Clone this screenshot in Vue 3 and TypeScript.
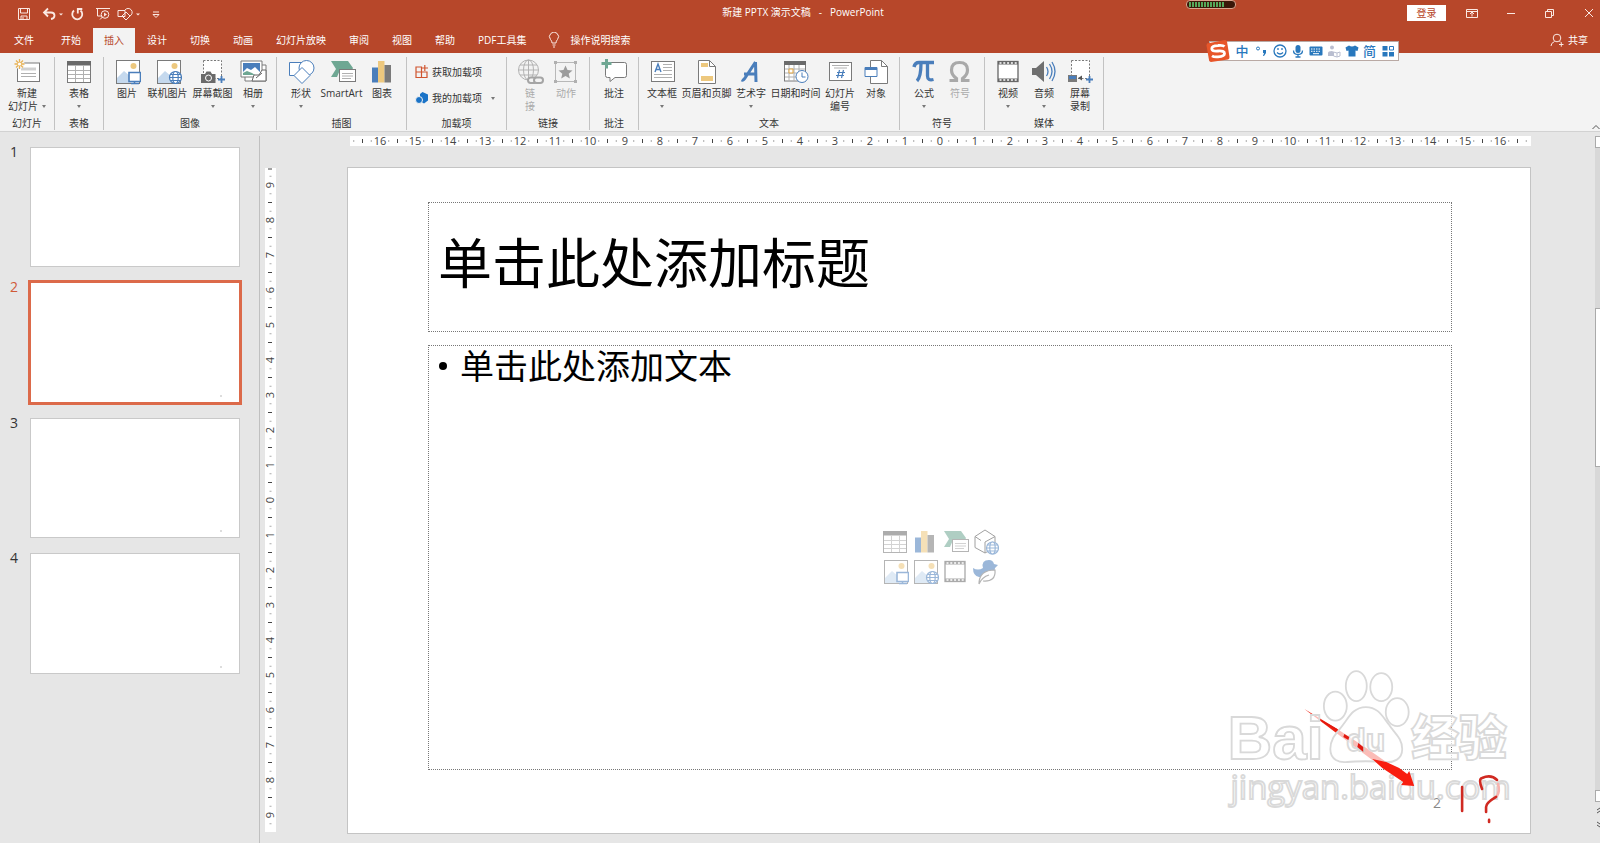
<script setup lang="ts">
import { ref } from 'vue'

interface Item { label: string[]; icon: string; wide?: string; caret?: 'below' | 'inline'; off?: boolean }
interface Group { name: string; items: Item[]; size?: string }

const B = '#4a7ebb', G = '#7a7a7a', L = '#b0b0b0', Y = '#edc87e', S = '#c5d9ee', T = '#6fa793'

const globe = (x: number, y: number, r: number, c: string) =>
  `<g fill="#fff" fill-opacity=".85" stroke="${c}" stroke-width="1.2"><circle cx="${x}" cy="${y}" r="${r}"/><ellipse cx="${x}" cy="${y}" rx="${r * 0.45}" ry="${r}"/><path d="M${x - r} ${y}h${2 * r}M${x - r * 0.85} ${y - r / 2}h${r * 1.7}M${x - r * 0.85} ${y + r / 2}h${r * 1.7}"/></g>`
const photo = `<rect x="3.5" y="1.5" width="23" height="23" fill="#fff" stroke="${G}"/><circle cx="20.500" cy="7" r="3" fill="${Y}"/><path d="M4 24v-5l7-7 7 6v6z" fill="${S}"/>`
const film = `<rect x="4" y="2.500" width="20" height="20" fill="#fff" stroke="#666" stroke-width="1.300"/><path d="M4 4h20M4 21h20" stroke="#666" stroke-width="3"/><path d="M5.500 4h18M5.500 21h18" stroke="#fff" stroke-width="1.600" stroke-dasharray="2 1.800"/>`
const table = `<rect x="2.500" y="2.500" width="23" height="21" fill="#fff" stroke="${G}"/><rect x="2" y="2" width="24" height="4.500" fill="#6a6a6a"/><path d="M3 11.500h22M3 15.500h22M3 19.500h22M10.500 6v17M18.500 6v17" stroke="${L}"/>`
const chart = `<path d="M4 8.500h6v15H4z" fill="${B}"/><path d="M10 2h6.500v21.500H10z" fill="${Y}"/><path d="M16.500 6H23v17.500h-6.500z" fill="${G}"/>`
const smart = `<path d="M3 2h17l5 7-1 2H12l-3 7H3l5-8z" fill="${T}"/><rect x="11.500" y="10.500" width="16" height="12" fill="#fff" stroke="${G}"/><path d="M14 14.500h11M14 17h11M14 19.500h9" stroke="${L}"/>`

const icons: Record<string, string> = {
  slide: `<rect x="4.500" y="4" width="22" height="18.500" fill="#fff" stroke="${G}"/><path d="M8 8.500h15v3H8z" fill="#d0d0d0"/><path d="M8 14.500h15M8 17.500h15" stroke="${L}"/><circle cx="6.500" cy="5" r="5" fill="#f3f3f3"/><path d="M6.500 0v10M1.500 5h10M3 1.500l7 7M10 1.500l-7 7" stroke="#e9b254" stroke-width="1.300"/><circle cx="6.500" cy="5" r="1.600" fill="#fff"/>`,
  table, chart, smart, film,
  photo: photo + `<path d="M16 13.500h11.500v9H16z" fill="#fff" stroke="${B}" stroke-width="1.600"/><path d="M21.500 22v2M18 24.500h8" stroke="${B}" stroke-width="1.500"/>`,
  webphoto: photo + globe(21.5, 18.5, 6, B),
  shot: `<rect x="4.500" y="1.500" width="18" height="18" fill="#fff" stroke="${G}" stroke-dasharray="2 1.500"/><path d="M2 15h4l1.500-2.500h4L13 15h3.500v9H2z" fill="#6a6a6a"/><circle cx="9.500" cy="19" r="3" fill="none" stroke="#fff"/><path d="M19 20.500h7M22.500 17v7" stroke="${B}" stroke-width="1.800"/>`,
  album: `<path d="M6 6h21v16H6z" fill="#fff" stroke="${G}"/><path d="M2 2h21v16H2z" fill="#fff" stroke="${G}"/><path d="M4 4h17v12H4z" fill="${B}"/><path d="M4 13l4-4 4 2 4-3 5 5v3H4z" fill="#fff"/><path d="M4 16v-2l4-2 5 2 3 2z" fill="${T}"/><path d="M13 22l2-6h5l3-5h4v11z" fill="#fff" stroke="#666"/><path d="M17 19l6-5" stroke="#666"/>`,
  shapes: `<path d="M2.500 3.500h13v13h-13z" fill="#fff" stroke="${B}"/><circle cx="19.500" cy="9" r="7.500" fill="#fff" stroke="${B}"/><path d="M7 16.500l8-8 8 8-8 8z" fill="#fff" stroke="${B}"/>`,
  link: `<g fill="none" stroke="#b3b3b3"><circle cx="12.500" cy="11" r="10"/><ellipse cx="12.500" cy="11" rx="5" ry="10"/><path d="M2.500 11h20M4 6h17M4 16h17M12.500 1v20"/></g><g fill="#f3f3f3" stroke="#a5a5a5" stroke-width="2"><rect x="12" y="18.500" width="9" height="5.500" rx="2.700"/><rect x="18" y="18.500" width="9" height="5.500" rx="2.700"/></g>`,
  action: `<rect x="3.500" y="3.500" width="20" height="19" fill="none" stroke="#b8b8b8"/><path d="M2 2h3v3H2zM22 2h3v3h-3zM2 21h3v3H2zM22 21h3v3h-3z" fill="#b0b0b0"/><path d="M13.500 6.500l2 4.500 5 .4-3.800 3.300 1.200 4.800-4.400-2.500-4.300 2.500 1.100-4.800-3.800-3.300 5-.4z" fill="#9c9c9c"/>`,
  comment: `<path d="M8 3.500h16.500q2 0 2 2v11q0 2-2 2H15l-5 4v-4H7.500q-2 0-2-2v-11z" fill="#fff" stroke="${G}"/><path d="M1.500 4.500h10M6.500 0v9.500" stroke="${T}" stroke-width="3"/>`,
  textbox: `<rect x="3.500" y="2.500" width="23" height="20" fill="#fff" stroke="${G}"/><path d="M7 13l3-8 3 8M8 10.500h4" fill="none" stroke="${B}" stroke-width="1.400"/><path d="M15 5.500h9M15 8.500h9M15 11.500h9M6 15.500h18M6 18.500h18" stroke="${L}"/>`,
  header: `<path d="M5.500 1.500h11l6 6v17h-17z" fill="#fff" stroke="${G}"/><path d="M16.500 1.500v6h6" fill="none" stroke="${G}"/><path d="M8 4h7v4H8zM8 17h12v5H8z" fill="${Y}"/>`,
  wordart: `<path d="M4.500 21c2 1 3-1 4.500-3.500L18.500 3M7 15h12M18.500 3l.5 20" fill="none" stroke="${B}" stroke-width="3"/>`,
  date: `<rect x="2.500" y="3" width="21" height="19" fill="#fff" stroke="${G}"/><path d="M2 2h22v4H2z" fill="#6a6a6a"/><path d="M3 10h20M3 14h20M3 18h20M7 6v16M12 6v16M17 6v16" stroke="${L}"/><path d="M7 10h4v4H7z" fill="#fff" stroke="#e0a33e"/><circle cx="20" cy="17.500" r="6" fill="#fff" stroke="${B}"/><path d="M20 13.500v4.500h3.500" fill="none" stroke="${B}"/>`,
  number: `<rect x="3.500" y="3.500" width="22" height="18" fill="#fff" stroke="${G}"/><path d="M6 6.500h17M8 9h13" stroke="${L}"/><path d="M13.500 11l-2 8M17.500 11l-2 8M11 13.500h8M10 16.500h8" stroke="${B}" stroke-width="1.200"/>`,
  object: `<path d="M8.500 1.500h11l6 6v17h-17z" fill="#fff" stroke="${G}"/><path d="M19.500 1.500v6h6" fill="none" stroke="${G}"/><path d="M3 8.500h12v9H3z" fill="#fff" stroke="${B}"/><path d="M3 8h12v3H3z" fill="${B}"/>`,
  pi: `<path d="M4 8q1-4.500 5-4.500h15" fill="none" stroke="${B}" stroke-width="3.500"/><path d="M11 4q0 14-4 18M17.500 4v13q0 5 6 3.500" fill="none" stroke="${B}" stroke-width="3.300"/>`,
  omega: `<path d="M3.500 21.500h7v-2q-5-3.500-5-8.500 0-7.500 8-7.500t8 7.500q0 5-5 8.500v2h7" fill="none" stroke="#a9a9a9" stroke-width="3.200"/>`,
  audio: `<path d="M2 9h4l8-7v21l-8-7H2z" fill="#6f6f6f"/><path d="M16.500 8q3 4.500 0 9M19.500 5q5 7.500 0 15M22 3q6 9.500 0 19" fill="none" stroke="${B}" stroke-width="1.300"/>`,
  record: `<rect x="5.500" y="1.500" width="18" height="18" fill="#fff" stroke="${G}" stroke-dasharray="2 1.500"/><path d="M2 16h9v7H2z" fill="${G}"/><path d="M3 17h7v3H3z" fill="${B}"/><path d="M12 19l4-2.500v5z" fill="#555"/><path d="M20 20.500h7M23.500 17v7" stroke="${B}" stroke-width="1.800"/>`,
  model: `<path d="M4 7.500L14 1l10 6.500v11L14 24 4 18.500zM4 7.500l6 4M14 13v11M24 7.500L14 13" fill="#fff" stroke="#555"/>` + globe(21.5, 19, 6, B),
  bird: `<path d="M12 9q-2-8 6-8 4 0 5 4l4 1-3 3q0 8-9 9H8q-6-1-6-9 5 3 10 0z" fill="${B}"/><path d="M8 25q0-14 16-14 1 12-12 11M8 25q3-7 10-9" fill="#fff" stroke="#777" stroke-width="1.200"/>`,
}

const groups: Group[] = [
  { name: '幻灯片', size: 'snug', items: [{ label: ['新建', '幻灯片'], icon: 'slide', caret: 'inline', wide: 'w-n' }] },
  { name: '表格', size: 'snug', items: [{ label: ['表格'], icon: 'table', caret: 'below', wide: 'w-s' }] },
  { name: '图像', items: [
    { label: ['图片'], icon: 'photo' },
    { label: ['联机图片'], icon: 'webphoto', wide: 'w-m' },
    { label: ['屏幕截图'], icon: 'shot', caret: 'below', wide: 'w-m' },
    { label: ['相册'], icon: 'album', caret: 'below' }] },
  { name: '插图', size: 'roomy', items: [
    { label: ['形状'], icon: 'shapes', caret: 'below' },
    { label: ['SmartArt'], icon: 'smart', wide: 'w-m' },
    { label: ['图表'], icon: 'chart' }] },
  { name: '加载项', items: [] },
  { name: '链接', items: [
    { label: ['链', '接'], icon: 'link', off: true },
    { label: ['动作'], icon: 'action', off: true }] },
  { name: '批注', size: 'snug', items: [{ label: ['批注'], icon: 'comment', wide: 'w-s' }] },
  { name: '文本', items: [
    { label: ['文本框'], icon: 'textbox', caret: 'below' },
    { label: ['页眉和页脚'], icon: 'header', wide: 'w-l' },
    { label: ['艺术字'], icon: 'wordart', caret: 'below' },
    { label: ['日期和时间'], icon: 'date', wide: 'w-l' },
    { label: ['幻灯片', '编号'], icon: 'number' },
    { label: ['对象'], icon: 'object' }] },
  { name: '符号', size: 'roomy', items: [
    { label: ['公式'], icon: 'pi', caret: 'below' },
    { label: ['符号'], icon: 'omega', off: true }] },
  { name: '媒体', items: [
    { label: ['视频'], icon: 'film', caret: 'below' },
    { label: ['音频'], icon: 'audio', caret: 'below' },
    { label: ['屏幕', '录制'], icon: 'record' }] },
]

const tabs = ['文件', '开始', '插入', '设计', '切换', '动画', '幻灯片放映', '审阅', '视图', '帮助', 'PDF工具集']
const activeTab = ref('插入')
const slides = [1, 2, 3, 4]
const current = ref(2)
const inserts = ['table', 'chart', 'smart', 'model', 'photo', 'webphoto', 'film', 'bird']

function marks(reach: number, extra: number) {
  const out: { at: number; label?: string; major?: boolean }[] = []
  for (let q = -reach * 4 - extra; q <= reach * 4 + extra; q++) {
    const at = q * 8.75
    if (q % 4 === 0) out.push({ at, label: String(Math.abs(q / 4)) })
    else out.push({ at, major: q % 2 === 0 })
  }
  return out
}
const hMarks = marks(16, 3)
const vMarks = marks(9, 1)
</script>

<template>
  <div class="app">
    <header class="top">
      <div class="titlebar">
        <div class="quick">
          <button aria-label="保存"><svg width="14" height="14" viewBox="0 0 14 14"><path d="M1.500 1.500h11v11h-11zM3.500 1.500v4.500h7V1.500M4 12.500V9h6v3.500M6 10v2" /></svg></button>
          <button class="near" aria-label="撤消"><svg width="22" height="14" viewBox="0 0 22 14"><path d="M2 5.500h7q3.500 0 3.500 3T9 12M6 1.500l-4 4 4 4" stroke-width="1.800" /><path class="fill" d="M17 6.500h4l-2 2z" /></svg></button>
          <button aria-label="重复"><svg width="14" height="14" viewBox="0 0 14 14"><path d="M4 3.500a5 5 0 1 0 6.500 0M7.800 6.500V2h4.500" stroke-width="1.800" /></svg></button>
          <button class="near" aria-label="从头开始"><svg width="16" height="14" viewBox="0 0 16 14"><path d="M1 1.500h14M2.500 2v7H7M5 12.500l3-3" /><circle cx="10" cy="7.500" r="3.800" /><path class="fill" d="M9 5.500l3 2-3 2z" /></svg></button>
          <button aria-label="形状"><svg width="24" height="14" viewBox="0 0 24 14"><path d="M1 3.500h7v6H1z" /><path d="M8 3a4 4 0 1 1 5 6M5 9l4-4 4 4-4 4z" /><path class="fill" d="M19 6.500h4l-2 2z" /></svg></button>
          <button aria-label="自定义快速访问工具栏"><svg width="8" height="14" viewBox="0 0 8 14"><path d="M1 5h6M1 7.500L4 10.500l3-3z" /></svg></button>
        </div>
        <h1><span>新建 PPTX 演示文稿</span><span>-</span><span>PowerPoint</span></h1>
        <div class="window">
          <button class="login">登录</button>
          <button aria-label="功能区显示选项"><svg width="12" height="12" viewBox="0 0 12 12"><path d="M.5 2.500h11v8H.5zM.5 4.500h11M6 9.500v-4M4 7l2-2 2 2" /></svg></button>
          <button aria-label="最小化"><svg width="12" height="12" viewBox="0 0 12 12"><path d="M2 6.500h8" /></svg></button>
          <button aria-label="还原"><svg width="12" height="12" viewBox="0 0 12 12"><path d="M1.500 4.500h6v6h-6zM3.500 4V2.500h6v6H8" /></svg></button>
          <button aria-label="关闭"><svg width="12" height="12" viewBox="0 0 12 12"><path d="M2 2l8 8M10 2l-8 8" /></svg></button>
        </div>
      </div>
      <nav class="tabs">
        <button v-for="t in tabs" :key="t" :class="{ active: t === activeTab }" @click="activeTab = t">{{ t }}</button>
        <button class="tell"><svg width="12" height="16" viewBox="0 0 12 16"><path d="M4 11q0-2-1.500-3.500a4.500 4.500 0 1 1 7 0Q8 9 8 11zM4.500 13h3M5 15h2" /></svg>操作说明搜索</button>
        <button class="share"><svg width="14" height="14" viewBox="0 0 14 14"><circle cx="7" cy="5" r="3.800" /><path d="M1 13q0-3 3.500-4.500M9.500 8.500l1 .500M9 11.500h4.500M11.300 9.200v4.500" /></svg>共享</button>
      </nav>
      <svg class="battery" width="50" height="9" viewBox="0 0 50 9"><rect x=".5" y=".5" width="49" height="8" rx="3.500" fill="#3a1708" stroke="#d9a48e" /><path d="M3 4.500h36" stroke="#55a85a" stroke-width="5" stroke-dasharray="2 1" /></svg>
    </header>

    <section class="ribbon">
      <div v-for="g in groups" :key="g.name" class="group" :class="g.size">
        <div v-if="g.items.length" class="items">
          <button v-for="it in g.items" :key="it.icon" class="item" :class="[it.wide, { off: it.off }]">
            <svg width="28" height="26" viewBox="0 0 28 26" v-html="icons[it.icon]"></svg>
            <span v-for="(line, i) in it.label" :key="i" class="line">{{ line }}<i v-if="it.caret === 'inline' && i === 1" class="caret"></i></span>
            <i v-if="it.caret === 'below'" class="caret below"></i>
          </button>
        </div>
        <div v-else class="addins">
          <button><svg width="14" height="14" viewBox="0 0 14 14"><path d="M1 2h5.500v5H1zM1 7h5.500v5.500H1zM6.500 7H12v5.500H6.500zM9.800 0v6M7 3h6" fill="none" stroke="#d0552f" stroke-width="1.200" /></svg>获取加载项</button>
          <button><svg width="14" height="14" viewBox="0 0 14 14"><path d="M7.500 1L13 3.500v6L9 12.500 5 10V3z" fill="#1a73c7" /><circle cx="4" cy="9" r="3.500" fill="#1a73c7" stroke="#f3f3f3" /></svg>我的加载项<i class="caret"></i></button>
        </div>
        <span class="name">{{ g.name }}</span>
      </div>
      <button class="collapse" aria-label="折叠功能区"><svg width="8" height="6" viewBox="0 0 8 6"><path d="M.5 5L4 1.500 7.500 5" fill="none" stroke="#555" /></svg></button>
    </section>

    <div class="ime">
      <svg class="logo" width="24" height="24" viewBox="0 0 24 24"><path d="M1 4.500L19 1q1.500 0 2 1.500L23.500 18q0 2-1.500 2.500L5 23q-1.500 0-2-2L.5 6.500z" fill="#e8562a" /><path d="M18.500 7.500Q17 6 12 6.500 5.500 7 5.800 9.800T12 12q6.500-.5 6.500 2.500T12 17.800q-4 .4-6-1" fill="none" stroke="#fff" stroke-width="2.800" /></svg>
      <button class="lead">中</button>
      <button class="lead" aria-label="标点"><svg width="12" height="12" viewBox="0 0 12 12"><circle cx="3" cy="3.500" r="1.500" fill="none" stroke="#2878bd" /><path d="M8 5h3v3L9 11H8l1-3H8z" fill="#2878bd" /></svg></button>
      <button aria-label="表情"><svg width="14" height="14" viewBox="0 0 14 14"><circle cx="7" cy="7" r="6" fill="none" stroke="#2878bd" stroke-width="1.300" /><path d="M5 4v2M9 4v2M4 8.500q3 3 6 0" fill="none" stroke="#2878bd" stroke-width="1.300" /></svg></button>
      <button aria-label="语音"><svg width="12" height="14" viewBox="0 0 12 14"><rect x="3.500" y="1" width="5" height="8" rx="2.500" fill="#2878bd" /><path d="M1.500 6.500q0 4 4.500 4t4.500-4M6 10v3M3.500 13h5" fill="none" stroke="#2878bd" stroke-width="1.300" /></svg></button>
      <button aria-label="键盘"><svg width="14" height="12" viewBox="0 0 14 12"><rect x=".5" y="1.500" width="13" height="9" rx="1" fill="#2878bd" /><path d="M2 4h10M2 6.300h10" stroke="#fff" stroke-dasharray="1.500 1" /><path d="M4 8.700h6" stroke="#fff" /></svg></button>
      <button aria-label="用户"><svg width="14" height="14" viewBox="0 0 14 14"><circle cx="5" cy="3.500" r="2" fill="#b9bed0" /><path d="M1 12V9q0-2 4-2l2 1v4z" fill="#b9bed0" /><path d="M6.500 8l3.500 1 3-1v4l-3 1-3.500-1zM10 9v4" fill="#fff" stroke="#b9bed0" /></svg></button>
      <button aria-label="皮肤"><svg width="14" height="12" viewBox="0 0 14 12"><path d="M4 .5q3 2 6 0l3.500 2-1 3.500-2-.5v6h-7v-6l-2 .5-1-3.500z" fill="#2878bd" /></svg></button>
      <button>简</button>
      <button aria-label="工具箱"><svg width="12" height="12" viewBox="0 0 12 12"><path d="M.5 1h5v4.500h-5zM.5 7h5v4.500h-5zM7 7h5v4.500H7z" fill="#2878bd" /><path d="M7.500 1.500h4v3.500h-4z" fill="none" stroke="#2878bd" /></svg></button>
    </div>

    <main class="work">
      <aside class="thumbs">
        <div v-for="n in slides" :key="n" class="thumb" :class="{ current: n === current }">
          <span class="num">{{ n }}</span>
          <button :aria-label="`幻灯片 ${n}`" @click="current = n"><i v-if="n > 1"></i></button>
        </div>
      </aside>

      <svg class="hruler" viewBox="0 0 1181 10">
        <rect width="1181" height="10" fill="#fff" />
        <g v-for="m in hMarks" :key="m.at">
          <text v-if="m.label" :x="590 + m.at" y="9" text-anchor="middle">{{ m.label }}</text>
          <path v-else :d="m.major ? `M${590 + m.at} 3v4` : `M${590 + m.at} 4v2`" :class="{ major: m.major }" />
        </g>
      </svg>

      <svg class="vruler" viewBox="0 0 11 664">
        <rect y="1" width="11" height="664" fill="#fff" />
        <path class="major" d="M3 2h4" />
        <g v-for="m in vMarks" :key="m.at">
          <text v-if="m.label" :transform="`translate(9 ${333 + m.at}) rotate(-90)`" text-anchor="middle">{{ m.label }}</text>
          <path v-else :d="m.major ? `M3 ${333 + m.at}h4` : `M4.500 ${333 + m.at}h2`" :class="{ major: m.major }" />
        </g>
      </svg>

      <article class="slide">
        <h2 class="ph title">单击此处添加标题</h2>
        <div class="ph body">
          <ul><li>单击此处添加文本</li></ul>
          <div class="inserts">
            <button v-for="k in inserts" :key="k" :aria-label="k"><svg width="28" height="26" viewBox="0 0 28 26" v-html="icons[k]"></svg></button>
          </div>
        </div>
        <footer>2</footer>
        <svg class="ink" viewBox="0 0 1184 666">
          <path d="M958 542l33 20 29 19 20 14-14-2-28-21z" fill="#f02010" />
          <g class="mark">
            <text x="881" y="592" class="latin">Bai</text>
            <path d="M1019.500 540C1008 540 1003 549 998 556 992 565 984 570 984 582c0 11 9 14 17 13 9-1 28-1 37 0 10 1 18-3 18-13 0-11-8-16-13-24-7-9-11-18-23.500-18z" />
            <ellipse cx="989" cy="539" rx="11.500" ry="14.500" /><ellipse cx="1010" cy="519" rx="10.500" ry="15" />
            <ellipse cx="1035" cy="520" rx="11" ry="14" /><ellipse cx="1051" cy="545" rx="11.500" ry="14" />
            <text x="1000" y="584" class="du">du</text>
            <text x="1065" y="588" class="cn">经验</text>
            <text x="884" y="632" class="url">jingyan.baidu.com</text>
          </g>
          <g fill="#e2190f">
            <path d="M975 553l16 9v2l-15-9zM998 567l5 3-1 3-5-3zM1012 576l5 4v5l-6-5z" />
            <path fill="#f81e10" d="M1026 592l14 3 13 6 8 6 2-3 5 15-13-1 2-3-9-6-12-8z" />
          </g>
          <g fill="none" stroke="#d02a22" stroke-width="2.600" stroke-linecap="round">
            <path d="M1152 617q2 7-1 12" stroke="#f7b3ae" />
            <path d="M1116 620v24M1136 622q-4-10 0-11 9-4 15 2M1150 630q-10 6-10 10v5M1143 653v2" />
          </g>
        </svg>
      </article>

      <div class="scroll">
        <i class="cap"></i><i class="track"></i><i class="grip"></i><i class="track low"></i><i class="cap"></i>
        <svg width="5" height="41" viewBox="0 0 5 41"><path d="M2 8l3-2M2 11l3-2M2 20l3 2M2 23l3 2" stroke="#555" fill="none" /></svg>
      </div>
    </main>
  </div>
</template>

<style>
body { margin: 0; }
</style>

<style scoped>
.app {
  position: relative;
  display: flex;
  flex-direction: column;
  min-height: 100vh;
  overflow: hidden;
  background: #e6e6e6;
  color: #333;
  font-family: "Open Sans", "Noto Sans CJK SC", sans-serif;
  font-size: 10px;
}
button {
  display: inline-flex;
  align-items: center;
  justify-content: center;
  margin: 0;
  padding: 0;
  border: 0;
  background: none;
  color: inherit;
  font: inherit;
  white-space: nowrap;
}
svg { display: block; flex: none; }

.top { background: #b7472a; color: #fff; position: relative; }
.top svg { fill: none; stroke: #fbe9e3; }
.top svg .fill { fill: #fbe9e3; stroke: none; }
.titlebar { display: grid; grid-template-columns: 1fr auto 1fr; align-items: center; height: 28px; }
.titlebar h1 { display: flex; gap: 8px; margin: 0; padding: 0 0 4px 6px; font-size: 10px; font-weight: 400; line-height: 16px; }
.quick { display: flex; gap: 11px; padding-left: 17px; }
.quick .near { margin-right: -5px; }
.window { display: flex; justify-content: flex-end; align-items: center; gap: 17px; padding-bottom: 3px; }
.window button { width: 22px; height: 16px; }
.window .login { width: 39px; margin-right: -2px; background: #fff; color: #b7472a; }
.tabs { display: flex; height: 25px; }
.tabs button { padding: 0 11px 2px; margin-right: 1px; }
.tabs button:first-child { padding: 0 14px 2px; margin-right: 2px; }
.tabs .active { background: #f3f3f3; color: #b7472a; }
.tabs .tell { gap: 10px; padding-left: 10px; }
.tabs .share { gap: 4px; margin-left: auto; }
.battery { position: absolute; left: 74.1%; top: 0; }

.ribbon { display: flex; align-items: stretch; padding-top: 4px; padding-bottom: 1px; background: #f3f3f3; border-bottom: 1px solid #d2d2d2; }
.group { display: flex; flex-direction: column; justify-content: space-between; padding: 0 5px; border-right: 1px solid #c2c2c2; }
.snug { padding: 0 4px; }
.roomy { padding: 0 6px; }
.items { display: flex; }
.item { flex-direction: column; justify-content: flex-start; width: 36px; padding-top: 2px; }
.w-s { width: 40px; }
.w-m { width: 45px; }
.w-n { width: 46px; }
.w-l { width: 53px; }
.line { display: flex; align-items: center; gap: 4px; line-height: 13px; }
.item svg { margin-bottom: 2px; }
.off { color: #aaa; }
.caret { width: 0; border: 2px solid transparent; border-top: 3px solid #777; border-bottom: 0; }
.below { margin-top: 5px; }
.name { margin-top: 3px; text-align: center; line-height: 14px; }
.addins { display: flex; flex-direction: column; gap: 12px; align-items: flex-start; padding: 8px 6px 0 3px; }
.addins button { gap: 3px; line-height: 14px; }
.addins .caret { margin-left: 6px; }
.collapse { margin-left: auto; align-self: flex-end; }

.ime {
  position: absolute;
  top: 41px;
  right: 201px;
  display: flex;
  align-items: center;
  gap: 5px;
  height: 18px;
  padding-right: 4px;
  background: #fff;
  border: 1px solid #b9a9a4;
  color: #2878bd;
  font-size: 13px;
  font-weight: 500;
  line-height: 16px;
}
.ime .logo { margin-left: -4px; }
.ime button { width: 13px; height: 16px; padding-bottom: 1px; }
.ime .lead { width: 14px; }

.work {
  flex: 1;
  display: grid;
  grid-template-columns: 260px 5px 11px 71px 3px 1fr 64px 5px;
  grid-template-rows: 10px 1fr;
  row-gap: 21px;
  padding-top: 4px;
}
.thumbs { grid-row: 1 / 3; border-right: 1px solid #c0c0c0; padding-top: 9px; display: flex; flex-direction: column; gap: 11px; }
.thumb { display: grid; grid-template-columns: 28px 1fr; padding-right: 17px; }
.num { padding-left: 10px; font-size: 14px; line-height: 13px; }
.thumb button {
  aspect-ratio: 215 / 125;
  box-sizing: border-box;
  align-items: flex-end;
  justify-content: flex-end;
  border: 3px solid transparent;
  background: #fff;
  background-clip: padding-box;
  outline: 1px solid #c9c9c9;
  outline-offset: -3px;
}
.thumb button i { width: 2px; height: 2px; margin: 0 17px 5px 0; background: #ddd; }
.thumb.current button { border-color: #dc6a4a; outline: 0; }
.current .num { color: #d05a38; }
.hruler { grid-column: 6; grid-row: 1; width: 100%; }
.vruler { grid-column: 3; grid-row: 2; align-self: start; width: 11px; }
.hruler, .vruler { overflow: visible; }
.hruler text, .vruler text { font-size: 11px; fill: #444; }
.hruler path, .vruler path { stroke: #aaa; }
.hruler .major, .vruler .major { stroke: #444; }

.slide {
  grid-column: 5 / 7;
  grid-row: 2;
  align-self: start;
  position: relative;
  box-sizing: border-box;
  aspect-ratio: 1184 / 667;
  display: flex;
  flex-direction: column;
  gap: 13px;
  padding: 34px 78px 10px 80px;
  border: 1px solid #c4c4c4;
  background: #fff;
  color: #000;
}
.ph { box-sizing: border-box; margin: 0; border: 1px dotted #777; }
.title { height: 130px; padding: 20px 9px; font-size: 54px; font-weight: 400; line-height: 80px; }
.body { flex: 1; display: flex; flex-direction: column; }
.body ul { margin: 0; padding: 0 0 0 10px; list-style: none; font-size: 34px; line-height: 40px; }
.body li { display: flex; align-items: center; gap: 13px; }
.body li::before { content: ""; width: 8px; height: 8px; border-radius: 50%; background: #000; }
.inserts { display: grid; grid-template-columns: repeat(4, 28px); gap: 4px 2px; margin: auto; padding-bottom: 42px; opacity: .55; }
footer { align-self: flex-end; margin-right: 11px; font-size: 14px; line-height: 40px; color: #888; }
.ink { position: absolute; left: 0; top: 0; width: 100%; }
.mark { fill: #fff; fill-opacity: .7; stroke: #d9d9d9; stroke-width: 1.800; }
.latin { font: bold 62px "Liberation Sans", sans-serif; }
.du { font: bold 32px "Liberation Sans", sans-serif; }
.cn { font: 900 48px "Noto Sans CJK SC", sans-serif; }
.url { font: 33px "Open Sans", sans-serif; }

.scroll { grid-column: 8; grid-row: 1 / 3; display: flex; flex-direction: column; }
.scroll .cap { height: 10px; flex: none; border: 1px solid #aaa; border-right: 0; background: #fff; }
.track { flex: 160; background: #d8d8d8; }
.grip { flex: 158; border: 1px solid #aaa; border-right: 0; background: #fff; }
.track.low { flex: 324; }
</style>
